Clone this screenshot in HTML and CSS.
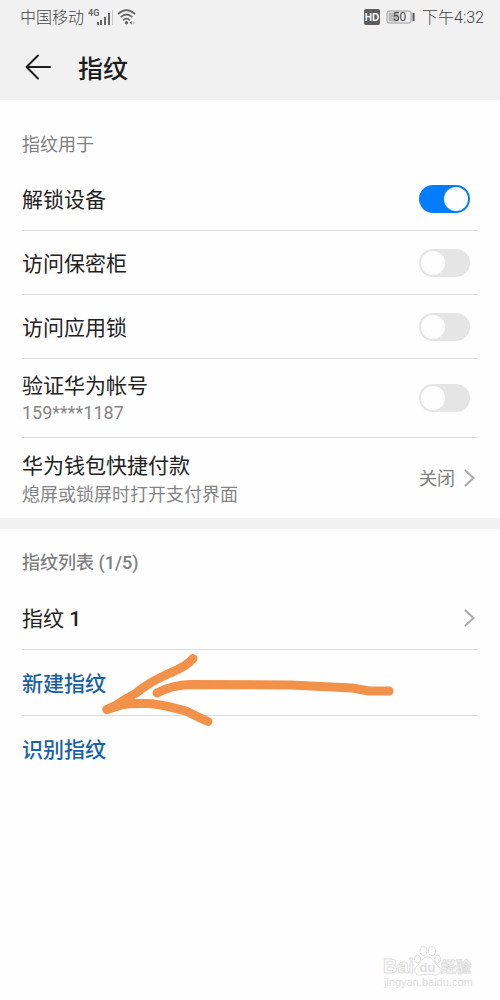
FILE: index.html
```html
<!DOCTYPE html>
<html lang="zh-CN">
<head>
<meta charset="utf-8">
<meta name="viewport" content="width=device-width, initial-scale=1">
<title>指纹</title>
<link rel="stylesheet" href="styles.css">
</head>
<body>
<div class="screen">
  <header class="top">
    <div class="status">
      <div class="status-group">
        <span>中国移动</span>
        <svg class="signal" width="26" height="20" viewBox="0 0 26 20" aria-hidden="true">
          <text class="net" x="0" y="9">4G</text>
          <g fill="#666"><rect x="9" y="15" width="2" height="3"/><rect x="12" y="13" width="2" height="5"/><rect x="16" y="10" width="2" height="8"/><rect x="20" y="6" width="2" height="12"/></g>
          <rect x="24" y="3" width="1" height="15" fill="#ccc"/>
        </svg>
        <svg class="wifi" width="20" height="20" viewBox="0 0 20 20" aria-hidden="true">
          <g fill="none" stroke="#666" stroke-width="1.7"><path d="M1 7Q9.500-.8 18 7"/><path d="M3.700 10.200Q9.500 4.800 15.300 10.200"/><path d="M6.200 13.300Q9.500 10 12.800 13.300"/></g>
          <circle cx="9.500" cy="15.800" r="1.700" fill="#666"/><path d="M12.500 15.800l2.300-1.800v3.600z" fill="#666"/><path d="M18 15.800l-2-1.600v3.200z" fill="#bbb"/>
        </svg>
      </div>
      <div class="status-group">
        <svg class="hd" width="16" height="16" viewBox="0 0 16 16" aria-hidden="true">
          <rect width="16" height="16" rx="2" fill="#5d5d5d"/><text class="hd-text" x="8" y="12" text-anchor="middle">HD</text>
        </svg>
        <svg class="battery" width="29" height="16" viewBox="0 0 29 16" aria-hidden="true">
          <rect x="1" y="2" width="24" height="12" rx="2" fill="#f0f0f0" stroke="#999"/><rect x="2.500" y="3.500" width="10.500" height="9" fill="#bbb"/><rect x="26.500" y="4" width="2" height="8" fill="#555"/><text class="battery-text" x="13.500" y="12" text-anchor="middle">50</text>
        </svg>
        <span>下午4:32</span>
      </div>
    </div>
    <div class="title-bar">
      <button class="back" type="button" aria-label="返回">
        <svg width="26" height="26" viewBox="0 0 26 26" fill="none" stroke="#1c1c1c" stroke-width="1.900" stroke-linecap="round" stroke-linejoin="round"><path d="M25 13H1.500M13 1.500L1.500 13L13 24.500"/></svg>
      </button>
      <h1 class="title">指纹</h1>
    </div>
  </header>
  <main>
    <section class="section">
      <h2 class="label">指纹用于</h2>
      <div class="row"><label class="name" for="unlock">解锁设备</label><input class="switch" type="checkbox" role="switch" id="unlock" checked></div>
      <div class="row"><label class="name" for="safe">访问保密柜</label><input class="switch" type="checkbox" role="switch" id="safe"></div>
      <div class="row"><label class="name" for="applock">访问应用锁</label><input class="switch" type="checkbox" role="switch" id="applock"></div>
      <div class="row row-tall"><label class="name" for="account">验证华为帐号<span class="sub">159****1187</span></label><input class="switch" type="checkbox" role="switch" id="account"></div>
      <a class="row row-wallet row-last" href="#wallet"><span class="name name-wallet">华为钱包快捷付款<span class="sub sub-text">熄屏或锁屏时打开支付界面</span></span><span class="value">关闭</span><svg class="chevron" width="11" height="18" viewBox="0 0 11 18"><path d="M1 1L9.500 9L1 17"/></svg></a>
    </section>
    <section class="section section-list">
      <h2 class="label label-list">指纹列表 (1/5)</h2>
      <a class="row" href="#finger"><span class="name">指纹 <span class="count">1</span></span><svg class="chevron" width="11" height="18" viewBox="0 0 11 18"><path d="M1 1L9.500 9L1 17"/></svg></a>
      <div class="row row-action"><button class="action" type="button">新建指纹</button>
        <svg class="arrow" width="300" height="80" viewBox="0 0 300 80" aria-hidden="true"><path d="M93 8.500C88 15 80 19 70 23C55 30 49 33 36 43C26 49 20 52 17 55L7 59.500C15 55 24 53 45 53.500C58 53 70 57 86 61C94 65 100 68 108 71.500M57 43C66 38 77 35 91 34.500L190 35L252 38L269 41H289"/><path d="M7 59.500L30 49L28 53Z"/></svg>
      </div>
      <div class="row row-action row-last"><button class="action" type="button">识别指纹</button></div>
    </section>
  </main>
  <svg class="watermark" width="100" height="52" viewBox="0 0 100 52" role="img" aria-label="Baidu 经验">
    <text class="wm-latin" x="3" y="31">Bai</text>
    <g class="wm-paw"><ellipse cx="37.500" cy="17" rx="3" ry="4"/><ellipse cx="43.500" cy="9" rx="3.500" ry="4.500"/><ellipse cx="52" cy="9" rx="3.500" ry="4.500"/><ellipse cx="57.500" cy="17" rx="3" ry="4"/><path d="M47.500 15C43 15 42 19 38 23C32 28 35 34 41 33C45 32 50 32 54 33C60 34 63 28 57 23C53 19 52 15 47.500 15Z"/></g>
    <text class="wm-du" x="47.500" y="30" text-anchor="middle">du</text>
    <text class="wm-cjk" x="61" y="30">经验</text>
    <text class="wm-url" x="4" y="44">jingyan.baidu.com</text>
  </svg>
</div>
</body>
</html>
```
FILE: styles.css
```css
* { box-sizing: border-box; }
body {
  margin: 0;
  background: #fefefe;
  color: #222;
  font-family: Roboto, "Noto Sans CJK SC", sans-serif;
}
.screen { position: relative; min-height: 100vh; }
.top { background: #f1f1f1; padding-bottom: 1px; }
.status {
  display: flex;
  justify-content: space-between;
  align-items: center;
  height: 34px;
  padding: 0 16px 0 20px;
  font-size: 16px;
  line-height: 24px;
  font-weight: 300;
  color: #444;
}
.status span { padding-top: 2px; }
.status-group { display: flex; align-items: center; }
.signal { margin-left: 4px; }
.wifi { margin-left: 3px; }
.battery { margin: 0 7px 0 6px; }
.net { font: bold 9px Roboto, sans-serif; fill: #666; }
.hd-text { font: bold 10px "Liberation Sans", sans-serif; fill: #fff; }
.battery-text { font: 12px Roboto, sans-serif; fill: #444; }
.title-bar { display: flex; align-items: center; gap: 27px; height: 65px; padding: 0 25px; }
.back { display: flex; padding: 0; border: 0; background: none; }
.title { margin: 0; padding-top: 7px; font-size: 25px; line-height: 36px; font-weight: 500; color: #1c1c1c; }
.section { padding: 0 22px; }
.section-list { border-top: 11px solid #f1f1f1; }
.label {
  margin: 0;
  padding: 31px 0 8px;
  font-size: 18px;
  line-height: 28px;
  font-weight: 400;
  color: #808080;
}
.label-list { padding: 20px 0 9px; font-weight: 500; }
.row {
  position: relative;
  display: flex;
  align-items: center;
  min-height: 64px;
  border-bottom: 1px solid #dcdcdc;
  color: inherit;
  text-decoration: none;
}
.row-tall { min-height: 79px; }
.row-wallet { min-height: 80px; }
.row-action { min-height: 66px; }
.row-last { border-bottom: 0; }
.name { flex: 1; padding-top: 2px; font-size: 21px; line-height: 28px; }
.name-wallet { padding-top: 5px; }
.count { font-weight: 500; }
.sub { display: block; font-size: 18px; line-height: 26px; color: #858585; }
.sub-text { line-height: 30px; }
.value { padding-top: 2px; font-size: 18px; line-height: 26px; color: #808080; margin-right: 9px; }
.chevron { margin-right: 3px; fill: none; stroke: #aaa; stroke-width: 2; }
.switch {
  appearance: none;
  width: 51px;
  height: 28px;
  margin: 0 8px 0 0;
  padding: 2px;
  border-radius: 14px;
  background: #e5e5e5;
  display: flex;
}
.switch::before { content: ""; width: 24px; height: 24px; border-radius: 50%; background: #fefefe; }
.switch:checked { background: #047dfd; justify-content: flex-end; }
.action {
  padding: 2px 0 0;
  border: 0;
  background: none;
  font: inherit;
  font-size: 21px;
  line-height: 28px;
  font-weight: 500;
  color: #1661a9;
}
.arrow {
  position: absolute;
  left: 78px;
  top: 0;
  z-index: 1;
  overflow: visible;
  pointer-events: none;
  fill: none;
  stroke: #f1914a;
  stroke-width: 9;
  stroke-linecap: round;
  stroke-linejoin: round;
}
.watermark { position: absolute; right: 20px; bottom: 6px; }
.wm-latin, .wm-cjk, .wm-paw { fill: #fefefe; stroke: #dedede; stroke-width: 1; }
.wm-latin { font: bold 20px "Liberation Sans", sans-serif; }
.wm-du { font: bold 13px "Liberation Sans", sans-serif; fill: #dedede; }
.wm-cjk { font: bold 15px "Noto Sans CJK SC", sans-serif; }
.wm-url { font: 11px "Liberation Sans", sans-serif; fill: #dedede; }
```
